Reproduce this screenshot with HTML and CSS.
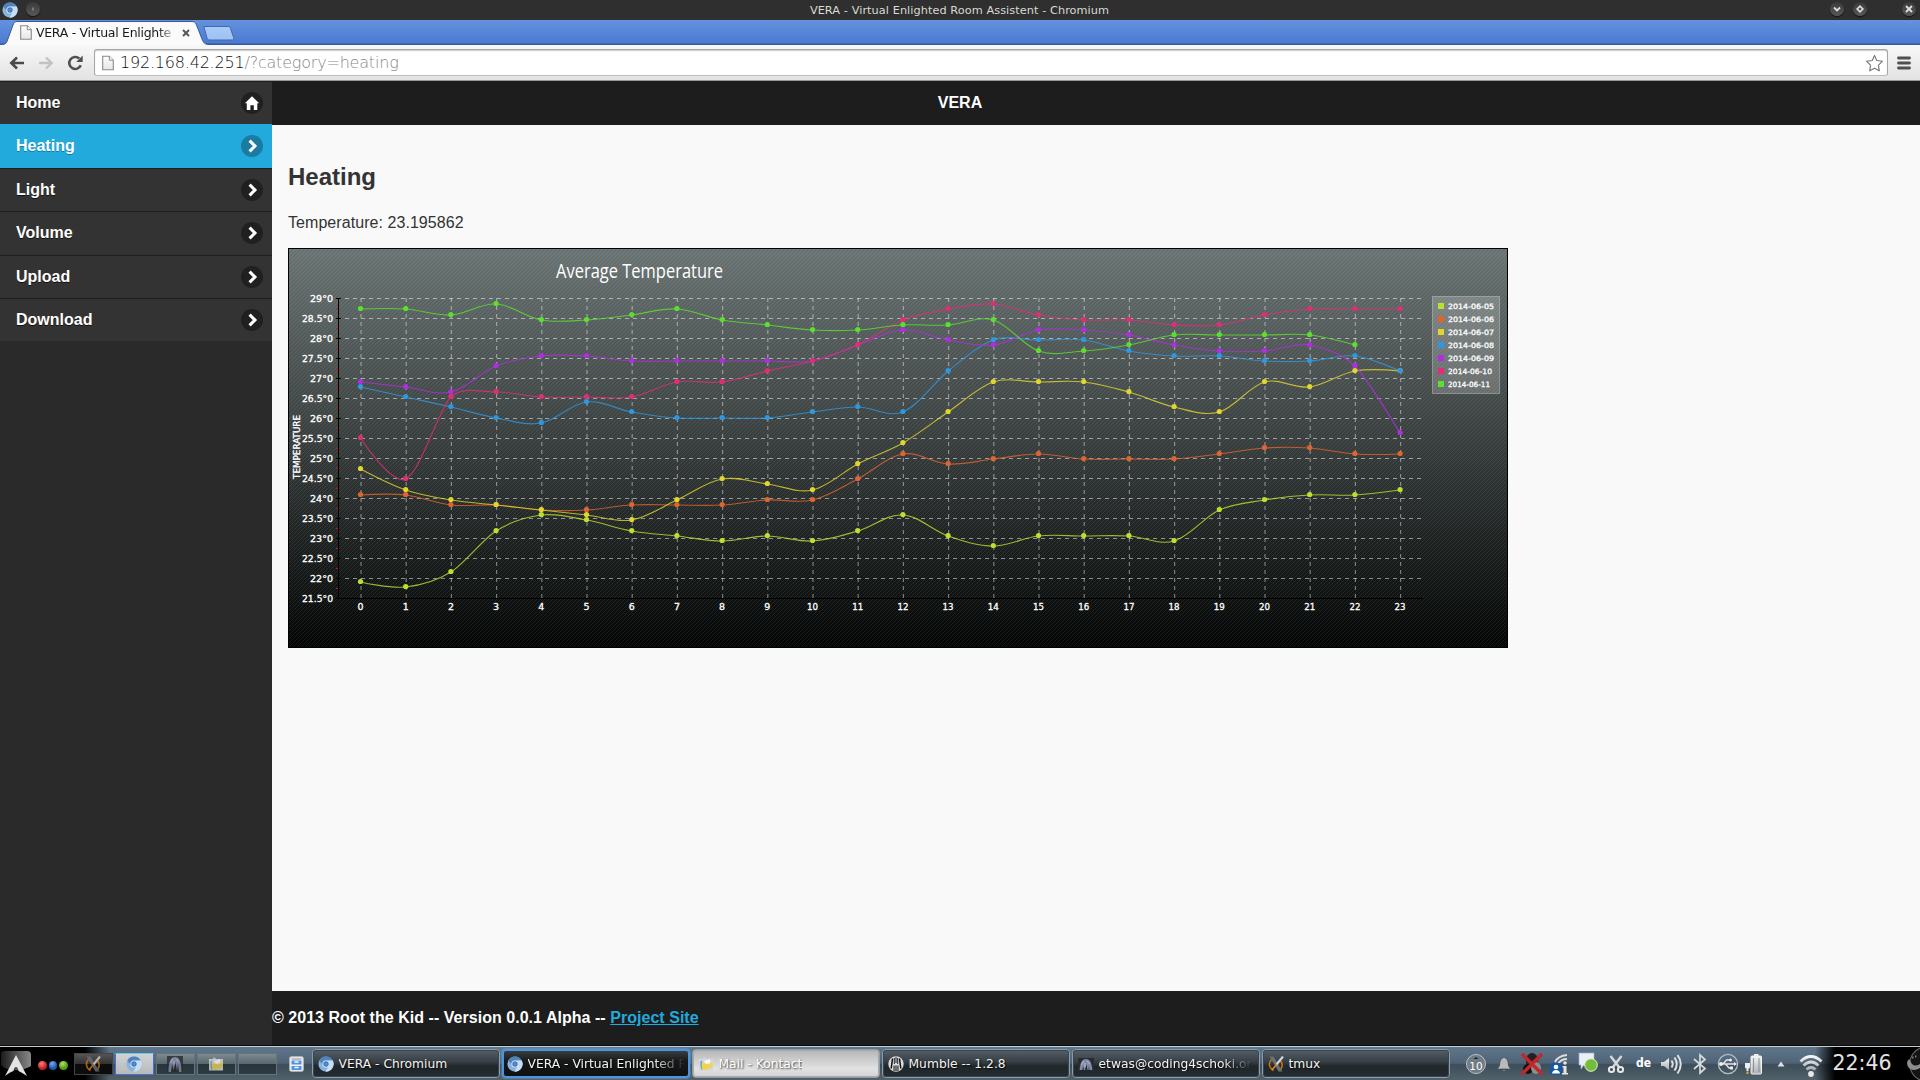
FILE: index.html
```html
<!DOCTYPE html>
<html lang="en">
<head>
<meta charset="utf-8">
<title>VERA - Virtual Enlighted Room Assistent</title>
<link rel="stylesheet" href="styles.css">
</head>
<body>
<svg class="defs" width="0" height="0">
  <defs>
    <linearGradient id="silver" x1="0" y1="0" x2="0" y2="1"><stop offset="0" stop-color="#f4f4f4"/><stop offset="1" stop-color="#a9afb2"/></linearGradient>
    <linearGradient id="page" x1="0" y1="0" x2="0" y2="1"><stop offset="0" stop-color="#fff"/><stop offset="1" stop-color="#e6e6e6"/></linearGradient>
    <linearGradient id="newtab" x1="0" y1="0" x2="0" y2="1"><stop offset="0" stop-color="#a9cbf8"/><stop offset="1" stop-color="#9dc1f2"/></linearGradient>
    <radialGradient id="blueball"><stop offset="0" stop-color="#5d95d6"/><stop offset="1" stop-color="#3c72b4"/></radialGradient>
    <symbol id="chromium" viewBox="0 0 16 16">
      <circle cx="8" cy="8" r="7.6" fill="#88b3e0"/>
      <path d="M1.3 4.4A7.6 7.6 0 0 1 14.8 4.6H8A3.5 3.5 0 0 0 4.7 8.7Z" fill="#4f83bd"/>
      <path d="M14.8 4.6A7.6 7.6 0 0 1 7.4 15.6L11 9.8A3.5 3.5 0 0 0 9 4.6Z" fill="#c9def4"/>
      <circle cx="8" cy="8" r="3.6" fill="#e3effb"/><circle cx="8" cy="8" r="2.7" fill="url(#blueball)"/>
    </symbol>
    <symbol id="file" viewBox="0 0 12 15"><path d="M.7.7H7.3L11.3 4.7V14.3H.7Z" fill="url(#page)" stroke="#8a8a8a" stroke-width="1.1"/><path d="M7.3.7V4.7H11.3" fill="#fff" stroke="#8a8a8a"/></symbol>
    <symbol id="chev" viewBox="0 0 22 22"><path d="M8.6 5.6L13.9 11L8.6 16.4" fill="none" stroke="#fff" stroke-width="3.1"/></symbol>
    <symbol id="xorg" viewBox="0 0 16 16"><path d="M3.500 3.500C0 7 1 12 5.500 14.500M11.500 4C15.500 7 15 12.500 10.500 14.500" fill="none" stroke="#c8720f" stroke-width="1.600"/><path d="M1.500.5H5.500L14.500 15.500H10.500Z" fill="#6b7073"/><path d="M15 .5L8.500 8.500" stroke="#d3d3d3" stroke-width="2.200"/><path d="M8.500 8.500L4 14" stroke="#dd8a20" stroke-width="1.500"/></symbol>
    <symbol id="kontact" viewBox="0 0 16 16"><path d="M1 3H5L6 1L8 3H15V14.500H1Z" fill="#d5d8d8"/><path d="M2 6L4 4L5 13L3 14Z" fill="#8aa7c2"/><path d="M4 7L11 8.500L14.500 5.500V11L7 14L4 12.500Z" fill="#f2d44a"/><path d="M6 5L12 3V7L8 8Z" fill="#f8f8f8"/></symbol>
    <symbol id="mumble" viewBox="0 0 16 16"><circle cx="8" cy="8" r="7.700" fill="#dcdcdc"/><path d="M4.500 2.500L3.200 12.500M11.500 2.500L12.800 12.500" stroke="#111" stroke-width="1.500"/><path d="M6.300 2V8M9.700 2V8M8 1V7" stroke="#111" stroke-width=".9"/><path d="M5.500 9.500H10.500V15H5.500Z" fill="#222"/><path d="M7 8V15M9 8V15" stroke="#ddd" stroke-width=".8"/></symbol>
    <symbol id="figure" viewBox="0 0 16 16"><path d="M0 0H16V16H0Z" fill="#2b2a2c"/><path d="M1.500 16C1.500 5 4 1 8 1S14.500 5 14.500 16H12L11 8L10 15L8.500 6L6.500 14L5 8L4 16Z" fill="#7f8ba6"/><path d="M3.500 7L5.500 3M9 3L11.500 6M7 9V5" stroke="#c3cbdd" stroke-width=".8"/></symbol>
  </defs>
</svg>

<div class="titlebar">
  <svg class="tb-logo" width="16" height="16"><use href="#chromium"/></svg>
  <span class="orb"><svg width="14" height="14"><path d="M7 5.500V8.500" stroke="#aaa"/></svg></span>
  <span class="window-title">VERA - Virtual Enlighted Room Assistent - Chromium</span>
  <span class="orb"><svg width="14" height="14"><path d="M4 5.500L7 8.500L10 5.500" fill="none" stroke="#ddd" stroke-width="1.800"/></svg></span>
  <span class="orb"><svg width="14" height="14"><path d="M7 4.200L9.800 7L7 9.800L4.200 7Z" fill="none" stroke="#ddd" stroke-width="1.700"/></svg></span>
  <span class="orb close"><svg width="14" height="14"><path d="M4 4L10 10M10 4L4 10" stroke="#ddd" stroke-width="1.900"/></svg></span>
</div>

<div class="tabstrip">
  <div class="tab">
    <svg class="tab-shape" width="210" height="25"><path d="M0 24.500C5 24.500 5.500 23 6.500 20L12 5C13 2 14 1.500 17 1.500H190C193 1.500 194.500 2 195.500 5L201 19C202.500 23 204 24.500 208 24.500V26H0Z" fill="#fafafa" stroke="#34599c" stroke-width="1"/></svg>
    <svg class="tab-file" width="12" height="15"><use href="#file"/></svg>
    <span class="tab-text">VERA - Virtual Enlighte</span>
    <svg class="tab-close" width="8" height="8"><path d="M1 1L7 7M7 1L1 7" stroke="#555" stroke-width="1.900"/></svg>
  </div>
  <svg class="newtab" width="32" height="16"><path d="M.8 1.500H25C26.500 1.500 27 2 27.500 3.500L30.800 13C31 14.500 30.500 15 29 15H7C5 15 4.500 14.500 4 13Z" fill="url(#newtab)" stroke="#4169ad"/></svg>
</div>

<div class="toolbar">
  <svg class="nav" width="16" height="14"><path d="M15 7H3M8 1.500L2.300 7L8 12.500" fill="none" stroke="#4b4b4b" stroke-width="2.600"/></svg>
  <svg class="nav" width="16" height="14"><path d="M1 7H13M8 1.500L13.700 7L8 12.500" fill="none" stroke="#c2c2c2" stroke-width="2.300"/></svg>
  <svg class="nav reload" width="17" height="16"><path d="M13.800 10.300A6 6 0 1 1 12.300 3.500" fill="none" stroke="#505050" stroke-width="2.600"/><path d="M15.700.5V7H9.200Z" fill="#505050"/></svg>
  <div class="omnibox">
    <svg width="12" height="16"><use href="#file"/></svg>
    <span class="url">192.168.42.251<i>/?category=heating</i></span>
    <svg class="star" width="19" height="18"><path d="M9.500 1.500L11.800 6.500L17.500 7.200L13.500 11.200L14.300 16.800L9.500 14.200L4.700 16.800L5.500 11.200L1.500 7.200L7.200 6.500Z" fill="#fff" stroke="#757575" stroke-width="1.100" stroke-linejoin="round"/></svg>
  </div>
  <svg class="burger" width="14" height="14"><path d="M1.500 2H12.500M1.500 7H12.500M1.500 12H12.500" stroke="#4f4f4f" stroke-width="2.800" stroke-linecap="round"/></svg>
</div>

<div class="viewport">
  <nav class="sidebar">
    <a class="item">Home<span class="disc"><svg width="22" height="22"><path d="M11 4.300L18.200 11.300H16.300V18H12.800V13.300H9.400V18H5.800V11.300H3.900Z" fill="#fff"/></svg></span></a>
    <a class="item active">Heating<span class="disc"><svg width="22" height="22"><use href="#chev"/></svg></span></a>
    <a class="item">Light<span class="disc"><svg width="22" height="22"><use href="#chev"/></svg></span></a>
    <a class="item">Volume<span class="disc"><svg width="22" height="22"><use href="#chev"/></svg></span></a>
    <a class="item">Upload<span class="disc"><svg width="22" height="22"><use href="#chev"/></svg></span></a>
    <a class="item">Download<span class="disc"><svg width="22" height="22"><use href="#chev"/></svg></span></a>
  </nav>
  <div class="main">
    <header class="page-header">VERA</header>
    <main class="content">
      <h2>Heating</h2>
      <p>Temperature: 23.195862</p>
      <svg id="chart" class="chart" width="1220" height="400" viewBox="0 0 1220 400"></svg>
    </main>
    <footer class="page-footer">© 2013 Root the Kid -- Version 0.0.1 Alpha -- <a>Project Site</a></footer>
  </div>
</div>

<div class="panel">
  <svg class="arch" width="31" height="27"><defs><linearGradient id="ab" x1="0" y1="0" x2="1" y2="0"><stop offset="0" stop-color="#222"/><stop offset="1" stop-color="#aaa"/></linearGradient></defs><path d="M0 4Q0 1 4 1H26Q30 1 30 5V16Q22 21 12 20Q3 19 0 15Z" fill="url(#ab)" opacity=".8"/><path d="M15 5L26 26Q20 22 17.500 21Q17 17 15 17T12.500 21Q9 22 4 26Z" fill="#e4e4e4"/></svg>
  <span class="dots"><b class="red"></b><b class="blue"></b><b class="green"></b></span>
  <div class="pager">
    <span><svg width="16" height="16"><use href="#xorg"/></svg></span>
    <span class="current"><svg width="16" height="16"><use href="#chromium"/></svg></span>
    <span><svg width="16" height="16"><use href="#figure"/></svg></span>
    <span><svg width="16" height="16"><use href="#kontact"/></svg></span>
    <span></span>
  </div>
  <svg class="cabinet" width="15" height="16"><rect x=".7" y=".7" width="13.600" height="14.600" rx="1.500" fill="#f4f4f4" stroke="#bbb"/><path d="M2.500 3H12.500" stroke="#888"/><rect x="2.500" y="4.500" width="10" height="4" fill="#4f94e0"/><rect x="2.500" y="10" width="10" height="4" fill="#4f94e0"/><path d="M5.500 6H9.500M5.500 11.500H9.500" stroke="#fff" stroke-width="1.500"/></svg>
  <div class="tasks">
    <div class="task"><svg width="16" height="16"><use href="#chromium"/></svg><span>VERA - Chromium</span></div>
    <div class="task focused"><svg width="16" height="16"><use href="#chromium"/></svg><span class="fade">VERA - Virtual Enlighted R</span></div>
    <div class="task urgent"><svg width="16" height="16"><use href="#kontact"/></svg><span>Mail - Kontact</span></div>
    <div class="task"><svg width="16" height="16"><use href="#mumble"/></svg><span>Mumble -- 1.2.8</span></div>
    <div class="task"><svg width="16" height="12"><use href="#figure" width="16" height="16"/></svg><span class="fade">etwas@coding4schoki.or</span></div>
    <div class="task"><svg width="16" height="16"><use href="#xorg"/></svg><span>tmux</span></div>
  </div>
  <div class="tray">
    <span><svg width="22" height="22"><circle cx="11" cy="11" r="9.500" fill="#6f7c84" stroke="#b9c2c6"/><path d="M8.500 6L11 4L13.500 6Z" fill="#222"/><text x="11" y="17" class="badge">10</text></svg></span>
    <span><svg width="16" height="18"><path d="M1 14Q4 12 4 7Q4.500 3.500 7 3Q8 1 9 3Q11.500 3.500 12 7Q12 12 15 14ZM6.500 15H9.500L8 17Z" fill="#b9bcbd" stroke="#444b50" stroke-width=".7"/></svg></span>
    <span><svg width="24" height="24"><ellipse cx="12" cy="9" rx="6" ry="8" fill="#222"/><ellipse cx="8" cy="17" rx="5" ry="5" fill="#111"/><ellipse cx="16" cy="16" rx="5" ry="6" fill="#8b8f91"/><path d="M2 2L22 22M22 2L2 22" stroke="#c3262b" stroke-width="3.400"/></svg></span>
    <span><svg width="20" height="22"><path d="M5 9Q8 3 17 2M8 11Q11 6 17 6" fill="none" stroke="#ddd" stroke-width="2"/><circle cx="15" cy="10" r="1.800" fill="#e5e5e5"/><path d="M12.500 13H16.500V20H18V21.500H12V20H13.500V14.500H12.500Z" fill="#e5e5e5"/><rect y="10" width="12" height="12" rx="3" fill="#1557a5"/><circle cx="6" cy="14" r="2.300" fill="#fff"/><path d="M2 20.500Q2.500 17 6 17T10 20.500Z" fill="#fff"/></svg></span>
    <span class="chat"><svg width="20" height="20"><path d="M1 1H16V13H6L3 17V13H1Z" fill="#e9eff6" stroke="#9ab0cb" stroke-width=".7"/><circle cx="13" cy="13" r="6.300" fill="#74bd3a" stroke="#e3f2d8"/></svg></span>
    <span><svg width="18" height="20"><path d="M3.500 2L12 13M14.500 2L6 13" stroke="#d5d8da" stroke-width="2.500"/><circle cx="4.500" cy="15.500" r="2.600" fill="none" stroke="#e8e8e8" stroke-width="2"/><circle cx="13.500" cy="15.500" r="2.600" fill="none" stroke="#e8e8e8" stroke-width="2"/></svg></span>
    <span class="lang">de</span>
    <span><svg width="24" height="22"><path d="M1 9H4L9 5V17L4 13H1Z" fill="url(#silver)"/><path d="M11.500 7.500Q14 11 11.500 14.500M14.500 4.500Q19 11 14.500 17.500M17.500 2Q24 11 17.500 20.500" fill="none" stroke="#dfe1e2" stroke-width="2"/></svg></span>
    <span><svg width="16" height="22"><path d="M2 6L13 15.500L8 20V2L13 6.500L2 16" fill="none" stroke="#d5dadd" stroke-width="1.700"/></svg></span>
    <span><svg width="22" height="22"><circle cx="11" cy="11" r="9.600" fill="none" stroke="#b5bcc0" stroke-width="1.300"/><path d="M3 11H18M6 11L9.500 7H13M8.500 11L12 15H14" fill="none" stroke="#e3e5e6" stroke-width="1.400"/><circle cx="4" cy="11" r="2" fill="#eee"/><circle cx="13.500" cy="7" r="1.500" fill="#eee"/><path d="M13 13.500H16V16.500H13ZM17 9L20 11L17 13Z" fill="#eee"/></svg></span>
    <span class="battery"><svg width="20" height="22"><rect x="7" y="3" width="10.500" height="18" rx="1" fill="url(#silver)" stroke="#f0f0f0"/><path d="M9.500 5V19M15 5V19" stroke="#777e82" stroke-width=".8"/><path d="M10 1H14.500V3H10ZM1 10H6V14Q6 15.500 4.500 15.500V18H2.500V15.500Q1 15.500 1 14Z" fill="#eee"/><rect x="2.500" y="18.500" width="2" height="2.500" fill="#e8a34a"/></svg></span>
    <span class="caret"><svg width="8" height="6"><path d="M4 .5L7.500 5.500H.5Z" fill="#e0e0e0"/></svg></span>
    <span class="wifi"><svg width="26" height="26"><path d="M2.500 9.500Q13 -.5 23.500 9.500M5.500 13.500Q13 6.500 20.500 13.500M8.500 17.500Q13 13.500 17.500 17.500" fill="none" stroke="url(#silver)" stroke-width="2.900"/><circle cx="13" cy="22" r="2.900" fill="#e8e8e8"/></svg></span>
  </div>
  <span class="clock">22:46</span>
  <svg class="cashew" width="19" height="34"><path d="M19 1A17.500 17.500 0 0 0 19 33" fill="#141414" stroke="#666" stroke-width="1.200"/><path d="M8 12Q4 16 8 21Q12 25 19 21V17Q14 20 11 17Q9 14 8 12Z" fill="#8e8e8e"/><path d="M11 10.500H12.500M14 9.500H15.500" stroke="#777" stroke-width="2"/></svg>
</div>
<script src="chart.js"></script>
</body>
</html>
```
FILE: styles.css
```css
* { box-sizing: border-box; }
body { margin: 0; width: 1920px; height: 1080px; overflow: hidden; display: flex; flex-direction: column; background: #f9f9f9; font-family: "Liberation Sans", Arial, sans-serif; }
svg { display: block; flex: none; }
.defs { position: absolute; }

/* window frame */
.titlebar { height: 20px; flex: none; background: #2f2f2f; display: flex; align-items: center; padding: 0 4px 0 2px; font: 11.2px "DejaVu Sans", sans-serif; color: #d8dad4; }
.orb { width: 14px; height: 14px; border-radius: 50%; margin-left: 9px; background: linear-gradient(#3a3a3a, #585858); box-shadow: 0 1px 1px #111; transform: translateY(-1px); }
.tb-logo { margin-right: -1px; }
.window-title { flex: 1; text-align: center; padding: 1px 0 0 58px; letter-spacing: .05px; white-space: nowrap; word-spacing: 0.1px; font-size: 11.3px; }
.close { margin-left: 35px; }

.tabstrip { height: 25px; flex: none; background: linear-gradient(#6492de, #4c7ad2 92%, #34599c 96%); display: flex; }
.tab { position: relative; width: 203px; height: 25px; display: flex; align-items: center; padding-left: 20px; }
.tab-shape { position: absolute; left: 1px; top: 0; }
.tab-file, .tab-text, .tab-close { position: relative; }
.tab-text { width: 139px; margin-left: 4px; overflow: hidden; white-space: nowrap; font: 12.5px "DejaVu Sans", sans-serif; letter-spacing: -.29px; color: #1a1a1a; -webkit-mask-image: linear-gradient(90deg, #000 122px, transparent 142px); }
.tab-close { margin-left: 7px; }
.newtab { margin: 5px 0 0 0; }

.toolbar { height: 36px; flex: none; background: linear-gradient(#f8f8f8, #e2e2e2); border-bottom: 1px solid #999; display: flex; align-items: center; padding: 0 9px 0 9px; }
.nav { margin-right: 13px; }
.nav.reload { margin-right: 10px; }
.omnibox { flex: 1; height: 27px; border: 1px solid #a6a6a6; border-bottom-color: #bdbdbd; border-radius: 3px; background: #fff; box-shadow: inset 0 1px 1px #ccc; display: flex; align-items: center; padding: 0 3px 0 7px; }
.url { flex: 1; margin-left: 6px; font: 16px "DejaVu Sans", sans-serif; font-weight: 200; letter-spacing: -.2px; color: #111; }
.url i { font-style: normal; color: #888; }
.burger { margin-left: 9px; }

/* web page */
.viewport { flex: 1; min-height: 0; display: flex; color: #333; }
.sidebar { width: 272px; background: #2a2a2a; display: flex; flex-direction: column; }
.item { height: 43.400px; padding: 0 9px 0 16px; display: flex; justify-content: space-between; align-items: center; background: #333; border-top: 1px solid #1f1f1f; color: #fff; font-weight: 700; font-size: 16px; line-height: 20px; text-shadow: 0 1px 0 #111; }
.item.active { background: #22aadd; border-top-color: #22aadd; text-shadow: 0 1px 0 #1a7a9f; padding-bottom: 1px; }
.disc { width: 22px; height: 22px; border-radius: 50%; background: #202020; }
.active .disc { background: #1b7ba0; }
.main { flex: 1; display: flex; flex-direction: column; }
.page-header { height: 44px; background: #1d1d1d; color: #fff; font-weight: 700; font-size: 16px; line-height: 43px; text-align: center; padding-right: 272px; }
.content { flex: 1; padding: 16px; background: #f9f9f9; }
h2 { margin: 20px 0 20px; font-size: 24px; line-height: 32px; }
p { margin: 0 0 15px; font-size: 16px; line-height: 20px; letter-spacing: .06px; }
.page-footer { height: 54px; background: #1d1d1d; color: #fff; font-weight: 700; font-size: 16px; line-height: 53px; letter-spacing: .035px; }
.page-footer a { color: #22aadd; text-decoration: underline; }

/* chart */
.chart text { font-family: "DejaVu Sans", sans-serif; fill: #fff; }
.chart .tick { font-size: 8.600px; stroke: #fff; stroke-width: .3px; }
.chart .legend { font-size: 7.300px; stroke: #fff; stroke-width: .3px; }
.chart .title { font: 400 20px "Open Sans", sans-serif; }

/* desktop panel */
.panel { height: 35px; flex: none; display: flex; align-items: center; border-top: 1px solid #0c0c0c; box-shadow: inset 0 1px 0 #c3cfd6; padding-top: 1px; overflow: hidden; background: linear-gradient(90deg, #000 85px, transparent 110px, transparent 1815px, #000 1835px), linear-gradient(#60788c, #506376 50%, #3d4d59 55%, #52626b); }
.arch { margin-left: 1px; }
.dots { display: flex; gap: 2px; margin: 3px 6px 0 6px; }
.dots b { width: 8.500px; height: 9px; border-radius: 50%; }
.red { background: radial-gradient(circle at 40% 30%, #ff8080, #c41f28 60%); }
.blue { background: radial-gradient(circle at 40% 30%, #74aef0, #1a57b0 60%); }
.green { background: radial-gradient(circle at 40% 30%, #b4e060, #4f9a10 60%); }
.pager { display: flex; gap: 2px; }
.pager span { width: 39px; height: 22px; display: flex; justify-content: center; align-items: center; border: 1px solid #66747b; background: linear-gradient(#7d8a90, #5a686f 48%, #27343a 50%, #2e3b42); }
.pager span:first-child { background: linear-gradient(#555, #333 48%, #0c0c0c 50%); border-color: #444; }
.pager .current { background: linear-gradient(#d0d2d4, #b7b9bb); border-color: #4670d8; border-top-color: #63c9ee; }
.pager span:not(.current) svg { opacity: .8; }
.cabinet { margin: 0 8px 0 12px; }
.tasks { display: flex; gap: 2px; }
.task { width: 188px; height: 29px; display: flex; align-items: center; gap: 5px; padding: 0 5px; border: 1px solid #8d9ca5; border-radius: 4px; outline: 1px solid #344651; outline-offset: -2px; background: linear-gradient(#555f65, #353e44 45%, #20272b 60%, #252c31); color: #f2f2f2; font: 12.300px "DejaVu Sans", sans-serif; text-shadow: 1px 1px 2px #000; white-space: nowrap; }
.task span { overflow: hidden; }
.focused { border: 2px solid #4a94e0; outline: 0; box-shadow: 0 0 2px #7cc2ff; background: linear-gradient(#3b3e40, #17191a 40%, #111); padding: 0 3px; }
.urgent { background: linear-gradient(#b5b5b5, #e2e2e2 70%, #d2d2d2); outline-color: #aaa; color: #fff; text-shadow: 1px 1px 2px #333; }
.task .fade { -webkit-mask-image: linear-gradient(90deg, #000 80%, transparent); }
.tray { display: flex; margin-left: 12px; }
.tray span { width: 28px; height: 28px; display: flex; align-items: center; justify-content: center; }
.tray .chat { padding-bottom: 3px; }
.tray .battery { padding-right: 4px; }
.tray .lang { font: 700 12px "DejaVu Sans Condensed", "DejaVu Sans", sans-serif; color: #fff; padding-bottom: 1px; }
.badge { font: 10.500px "DejaVu Sans", sans-serif; fill: #fff; text-anchor: middle; }
.tray .caret { width: 22px; }
.tray .wifi { width: 38px; padding-top: 3px; }
.clock { font: 20.500px "DejaVu Sans", sans-serif; color: #e4e4e4; margin: 0 auto 1px 3px; white-space: nowrap; }
```
FILE: chart.js
```js
// Daily temperature curves: one y position per hour, in chart units.
const days = [
  ["2014-06-05", "#bce02e", [334,339,324,283,267,272,283,288,293,288,293,283,267,288,298,288,288,288,293,262,252,247,247,242]],
  ["2014-06-06", "#e0642e", [247,247,257,257,262,262,257,257,257,252,252,231,206,216,211,206,211,211,211,206,200,200,206,206]],
  ["2014-06-07", "#e0d62e", [221,242,252,257,262,267,272,252,231,236,242,216,195,164,134,134,134,144,159,164,134,139,123,123]],
  ["2014-06-08", "#2e97e0", [139,149,159,170,175,154,164,170,170,170,164,159,164,123,92,92,92,103,108,108,113,113,108,123]],
  ["2014-06-09", "#b02ee0", [134,139,144,118,108,108,113,113,113,113,113,97,82,92,97,82,82,87,97,103,103,97,118,185]],
  ["2014-06-10", "#e02e75", [190,231,149,144,149,149,149,134,134,123,113,97,72,61,56,67,72,72,77,77,67,61,61,61]],
  ["2014-06-11", "#5ce02e", [61,61,67,56,72,72,67,61,72,77,82,82,77,77,72,103,103,97,87,87,87,87,97]]
];
const X = i => 72.5 + i * 45.2;
let s = `<defs>
<linearGradient id="bg" x1="0" y1="0" x2="0" y2="1"><stop offset="0" stop-color="#6f7777"/><stop offset="1" stop-color="#000"/></linearGradient>
<pattern id="hatch" width="4" height="4" patternUnits="userSpaceOnUse" shape-rendering="crispEdges">
<path d="M3 0h1v1h-1zM2 1h1v1h-1zM1 2h1v1h-1zM0 3h1v1h-1z" fill="#4f9a90" fill-opacity=".2"/>
<path d="M1 0h1v1h-1zM0 1h1v1h-1zM3 2h1v1h-1zM2 3h1v1h-1z" fill="#5a2a2a" fill-opacity=".14"/></pattern></defs>
<rect width="1220" height="400" fill="url(#bg)"/><rect width="1220" height="400" fill="url(#hatch)"/>
<rect x=".5" y=".5" width="1219" height="399" fill="none" stroke="#000"/>
<text class="title" x="268" y="30" textLength="167" lengthAdjust="spacingAndGlyphs">Average Temperature</text>
<text class="tick" transform="translate(12 231) rotate(-90)" textLength="64" lengthAdjust="spacingAndGlyphs">TEMPERATURE</text>`;
for (let k = 0; k < 16; k++) {
  const y = 50.5 + k * 20, v = String(29 - k / 2);
  if (k < 15) {
    s += `<path d="M57 ${y}H1133" stroke="#fff" stroke-opacity=".5" stroke-dasharray="4 4"/>`;
    s += `<path d="M48 ${y + 10}H51" stroke="#f00"/>`;
  }
  s += `<path d="M48 ${y}H53" stroke="#000"/>`;
  const w = v.length > 2 ? 31 : 23;
  s += `<text class="tick" x="${45 - w}" y="${y + 3}" textLength="${w}" lengthAdjust="spacingAndGlyphs">${v}°0</text>`;
}
for (let i = 0; i < 24; i++) {
  const w = i < 10 ? 6 : 11;
  s += `<path d="M${X(i) + .5} 50V350" stroke="#fff" stroke-opacity=".42" stroke-width="1.200" stroke-dasharray="4 4"/>`;
  s += `<text class="tick" x="${X(i) - w / 2}" y="361.500" textLength="${w}" lengthAdjust="spacingAndGlyphs">${i}</text>`;
}
s += `<path d="M50.500 50V351M50 350.500H1135" stroke="#000" fill="none"/>`;
for (const [, c, ys] of days) {
  const p = ys.map((y, i) => [X(i), y]);
  let d = `M${p[0]}`;
  const dir = i => {
    if (i === 0 || i === p.length - 1) return [0, 0];
    const a = p[i - 1], b = p[i + 1];
    const l = Math.hypot(b[0] - a[0], b[1] - a[1]);
    return [(b[0] - a[0]) / l * 16, (b[1] - a[1]) / l * 16];
  };
  for (let i = 1; i < p.length; i++) {
    const u = dir(i - 1), v = dir(i);
    d += `C${p[i-1][0] + u[0]} ${p[i-1][1] + u[1]} ${p[i][0] - v[0]} ${p[i][1] - v[1]} ${p[i]}`;
  }
  s += `<path d="${d}" fill="none" stroke="${c}" stroke-opacity=".8" stroke-width="1.150"/>`;
}
for (const [, c, ys] of days) {
  ys.forEach((y, i) => { s += `<circle cx="${X(i)}" cy="${y - .5}" r="2.600" fill="${c}"/>`; });
}
s += `<rect x="1144.500" y="48.500" width="67" height="97" fill="#fff" fill-opacity=".2" stroke="#fff" stroke-opacity=".3"/>`;
days.forEach(([n, c], k) => {
  const y = 55 + k * 13;
  s += `<rect x="1150.500" y="${y + .5}" width="5" height="5" fill="${c}" stroke="${c}"/>`;
  s += `<text class="legend" x="1160" y="${y + 6}" textLength="${n.endsWith("11") ? 42 : n.endsWith("10") ? 44 : 46}" lengthAdjust="spacingAndGlyphs">${n}</text>`;
});
document.getElementById("chart").innerHTML = s;
```
